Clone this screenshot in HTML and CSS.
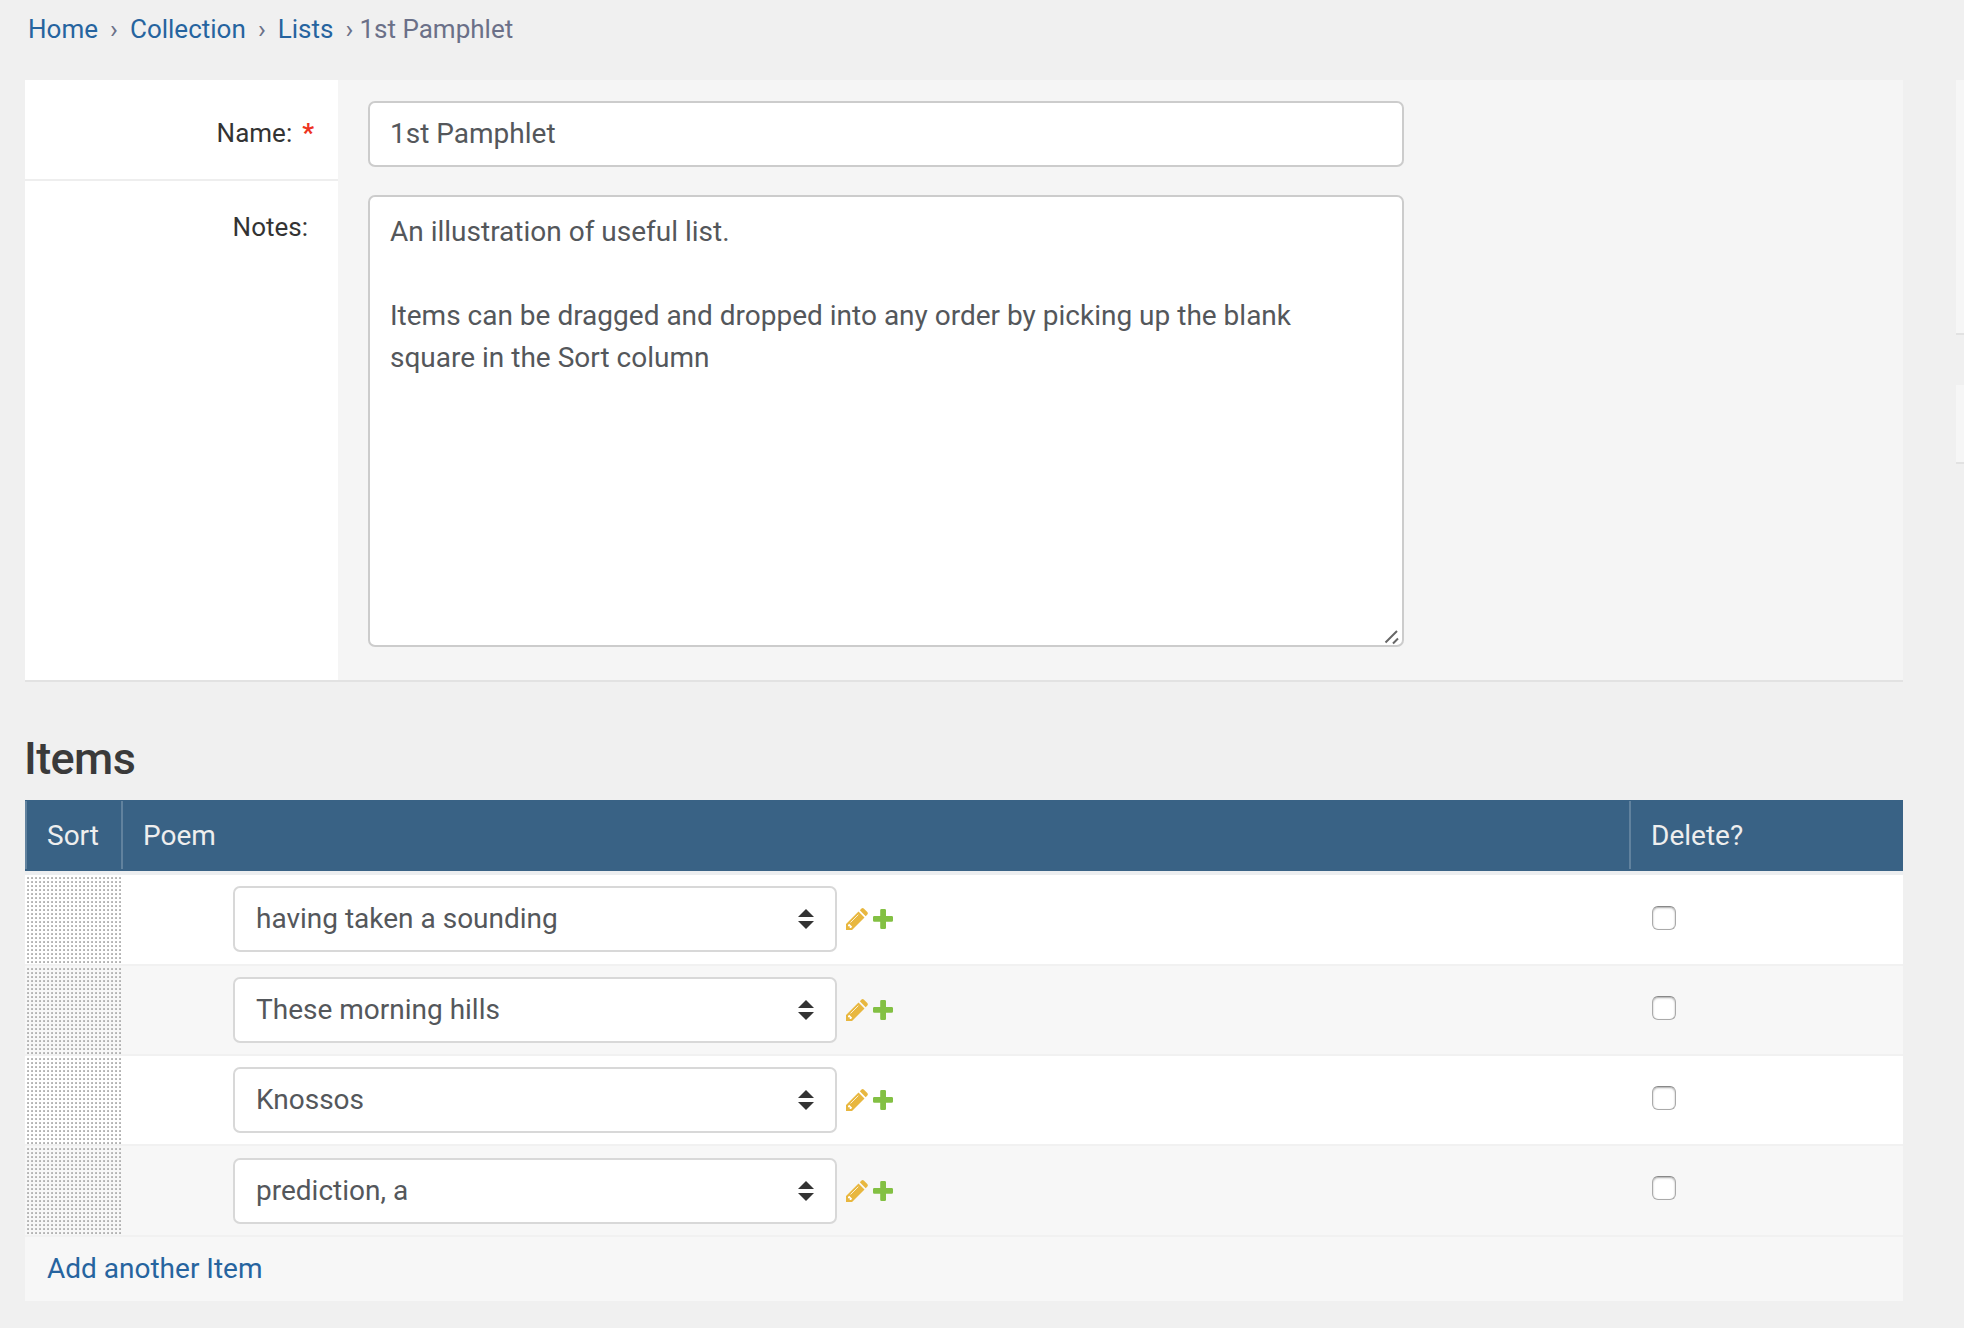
FILE: index.html
```html
<!DOCTYPE html>
<html lang="en">
<head>
<meta charset="utf-8">
<title>1st Pamphlet</title>
<link rel="stylesheet" href="styles.css">
</head>
<body>
<svg width="0" height="0" class="defs">
  <symbol id="arrows" viewBox="0 0 16 20"><path d="M8 0 16 8H0zM0 12h16L8 20z" fill="#333"/></symbol>
  <symbol id="pencil" viewBox="0 0 22 22"><path d="M0 22V16L12.500 3.500 18.500 9.500 6 22zM13.800 2.300 15.500.6Q16.700-.4 18 .7L21.300 4Q22.400 5.300 21.400 6.500L19.700 8.200z" fill="#e8b73f"/><path d="M4.500 14.500 12.300 6.700" stroke="#fff" stroke-width=".8"/><path d="M2 17V18.300H3.700V20H5L6.200 18.800 3.200 15.800z" fill="#fff"/></symbol>
  <symbol id="plus" viewBox="0 0 20 20"><path d="M8.500 0h3.200q1.300 0 1.300 1.300V7h5.700Q20 7 20 8.300v3.200q0 1.300-1.300 1.300H13v5.900q0 1.300-1.300 1.300H8.500q-1.300 0-1.300-1.300v-5.900H1.300Q0 12.800 0 11.500V8.300Q0 7 1.300 7h5.900V1.300Q7.200 0 8.500 0z" fill="#83c043"/></symbol>
</svg>
<nav class="crumbs"><a>Home</a><i>›</i><a>Collection</a><i>›</i><a>Lists</a><i class="last">›</i><span>1st Pamphlet</span></nav>
<div class="layout">
  <main class="main">
    <section class="panel">
      <div class="field name"><label class="label">Name:<b>*</b></label><div class="control"><div class="input">1st Pamphlet</div></div></div>
      <div class="field notes"><label class="label">Notes:</label><div class="control"><div class="input area"><p>An illustration of useful list.</p><p>&nbsp;</p><p>Items can be dragged and dropped into any order by picking up the blank</p><p>square in the Sort column</p><svg class="grip" width="16" height="16" viewBox="0 0 16 16"><path d="M1.500 13.500 13 2M9 14.500 14 9.500" stroke="#666" stroke-width="2"/></svg></div></div></div>
    </section>
    <h2 class="title"><span>Items</span></h2>
    <section class="table">
      <div class="head"><div class="sort">Sort</div><div class="poem">Poem</div><div class="delete">Delete?</div></div>
      <div class="row"><div class="handle"></div><div class="cell"><div class="select"><span>having taken a sounding</span><svg width="16" height="20"><use href="#arrows"/></svg></div><svg class="edit" width="22" height="22"><use href="#pencil"/></svg><svg class="add" width="20" height="20"><use href="#plus"/></svg></div><div class="check"><span class="box"></span></div></div>
      <div class="row even"><div class="handle"></div><div class="cell"><div class="select"><span>These morning hills</span><svg width="16" height="20"><use href="#arrows"/></svg></div><svg class="edit" width="22" height="22"><use href="#pencil"/></svg><svg class="add" width="20" height="20"><use href="#plus"/></svg></div><div class="check"><span class="box"></span></div></div>
      <div class="row"><div class="handle"></div><div class="cell"><div class="select"><span>Knossos</span><svg width="16" height="20"><use href="#arrows"/></svg></div><svg class="edit" width="22" height="22"><use href="#pencil"/></svg><svg class="add" width="20" height="20"><use href="#plus"/></svg></div><div class="check"><span class="box"></span></div></div>
      <div class="row even"><div class="handle"></div><div class="cell"><div class="select"><span>prediction, a</span><svg width="16" height="20"><use href="#arrows"/></svg></div><svg class="edit" width="22" height="22"><use href="#pencil"/></svg><svg class="add" width="20" height="20"><use href="#plus"/></svg></div><div class="check"><span class="box"></span></div></div>
      <div class="foot"><a>Add another Item</a></div>
    </section>
  </main>
  <aside class="side"><div class="block tall"></div><div class="block"></div></aside>
</div>
</body>
</html>
```
FILE: styles.css
```css
* { box-sizing: border-box; }
body { margin: 0; height: 1328px; overflow: hidden; background: #f0f0f0; color: #333; font: 28px Roboto, sans-serif; }
.defs { position: absolute; }
p { margin: 0; }
a { color: #26649f; }
.crumbs { height: 80px; padding: 9px 0 0 28px; display: flex; font-size: 26px; line-height: 40px; color: #6b7088; }
.crumbs i { font-style: normal; width: 32px; text-align: center; }
.crumbs .last { width: 26px; padding-left: 6px; }
.layout { display: flex; }
.main { width: 1878px; margin-left: 25px; }
.panel { height: 602px; background: #f5f5f5; border-bottom: 2px solid #e2e2e2; }
.field { display: flex; }
.name { height: 101px; }
.notes { height: 499px; }
.label { width: 313px; background: #fff; text-align: right; font-size: 26px; line-height: 40px; padding: 33px 30px 0 0; }
.name .label { border-bottom: 2px solid #eee; padding-right: 24px; }
.notes .label { padding-top: 26px; }
.label b { color: #ee3322; margin-left: 10px; }
.control { padding: 21px 0 0 30px; }
.notes .control { padding-top: 14px; }
.input { width: 1036px; height: 66px; border: 2px solid #ccc; border-radius: 7px; background: #fff; color: #54575b; padding: 0 20px; line-height: 62px; }
.area { position: relative; height: 452px; padding-top: 14px; line-height: 42px; }
.grip { position: absolute; right: 2px; bottom: 0; }
.title { margin: 0; height: 118px; padding-top: 50px; font-size: 45px; line-height: 54px; font-weight: 500; letter-spacing: -.6px; text-indent: -1px; color: #3a3a3a; }
.head { height: 75px; display: flex; background: #396285; color: #eee; border-bottom: 4px solid #eceef0; padding: 1px 0 2px; line-height: 69px; }
.head > div { height: 68px; border-left: 2px solid #61829e; padding-left: 20px; }
.sort { width: 96px; }
.poem { flex: 1; }
.delete { width: 274px; }
.row { display: flex; height: 90px; background: #fff; border-bottom: 2px solid #f1f1f1; }
.row:nth-child(2), .row:nth-child(5) { height: 91px; }
.even { background: #f7f7f7; }
.handle { width: 96px; background: conic-gradient(from 90deg at 2px 2px, #bababa 0 0) 2px 2px / 4px 4px; background: linear-gradient(135deg, #e4e4e4 0, #ababab 100%) 0 0 / 4px 4px; -webkit-mask: linear-gradient(90deg, transparent 1.500px, #000 2px) 0 0 / 4px 4px, linear-gradient(transparent 1.500px, #000 2px) 0 0 / 4px 4px; -webkit-mask-composite: source-in; mask-composite: intersect; }
.cell { flex: 1; padding: 11px 0 0 112px; display: flex; }
.row:nth-child(5) .cell { padding-top: 12px; }
.select { width: 604px; height: 66px; border: 2px solid #d8d8d8; border-radius: 7px; background: #fff; color: #54575b; padding: 0 21px; line-height: 62px; display: flex; justify-content: space-between; align-items: center; }
.row:nth-child(2) .select, .row:nth-child(4) .select { line-height: 64px; }
.edit { margin: 22px 5px 0 9px; }
.add { margin-top: 23px; }
.check { width: 251px; padding-top: 30px; }
.row:nth-child(2) .check { padding-top: 31px; }
.box { display: block; width: 24px; height: 24px; border: 1px solid #aaa; border-top-color: #888; border-radius: 6px; background: #fff; box-shadow: inset 0 1px 2px #aaa; }
.foot { height: 64px; background: #f7f7f7; padding-left: 22px; line-height: 63px; }
.side { margin-left: 53px; flex: 1; }
.block { height: 79px; background: #f6f6f6; border-bottom: 2px solid #e2e2e2; }
.tall { height: 255px; margin-bottom: 50px; }
```
